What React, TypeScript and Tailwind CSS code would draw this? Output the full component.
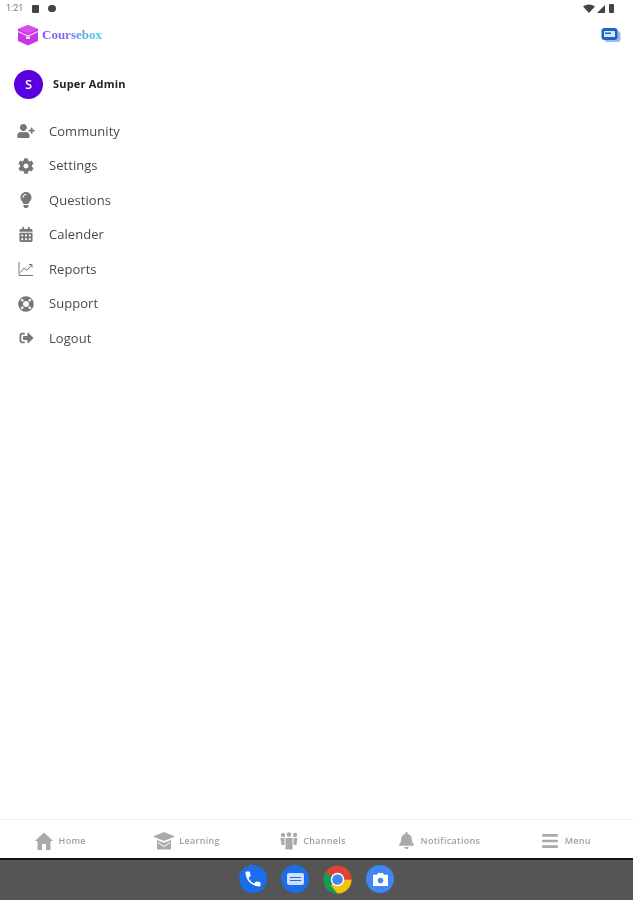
import React from 'react';
import {
  FaBars,
  FaBell,
  FaCalendarAlt,
  FaCog,
  FaLifeRing,
  FaLightbulb,
  FaSignOutAlt,
  FaUserPlus,
} from 'react-icons/fa';
import { MdPhone } from 'react-icons/md';

const ReportsIcon = ({ className }: { className?: string }) => (
  <svg viewBox="0 0 16 16" className={className} fill="none" stroke="currentColor" strokeWidth="1">
    <path d="M1 1v13.5h14" />
    <path d="M2.5 11.5 6 7l3 2.5L13.5 4" />
    <path d="M11 3.5h3v3" />
  </svg>
);

const HomeIcon = () => (
  <svg viewBox="0 0 18 18" className="w-[18px] h-[18px]" fill="currentColor">
    <path d="M9 0.5 18 9h-2.5v9H11v-6H7v6H2.5V9H0z" />
  </svg>
);

const LearningIcon = () => (
  <svg viewBox="0 0 22 18" className="w-[22px] h-[18px]" fill="currentColor">
    <path d="M11 0 22 4.5 11 9 0 4.5z" />
    <path d="M4 8 11 10.8 18 8v9.5H4z" />
    <path d="M5 10.5 11 14.5 17 10.5" fill="none" stroke="#fff" strokeWidth="1" />
  </svg>
);

const ChannelsIcon = () => (
  <svg viewBox="0 0 18 18" className="w-[18px] h-[18px]" fill="currentColor">
    <circle cx="3" cy="3" r="2.2" />
    <circle cx="9" cy="2.6" r="2.4" />
    <circle cx="15" cy="3" r="2.2" />
    <path d="M0.5 6h4v7h-3z" />
    <path d="M13.5 6h4l-1 7h-3z" />
    <path d="M5.5 6h7v11.5h-7z" />
  </svg>
);

const menu = [
  { label: 'Community', icon: <FaUserPlus className="w-[18px] h-[14px]" /> },
  { label: 'Settings', icon: <FaCog className="w-[16px] h-[16px]" /> },
  { label: 'Questions', icon: <FaLightbulb className="w-[12px] h-[16px]" /> },
  { label: 'Calender', icon: <FaCalendarAlt className="w-[14px] h-[15px]" /> },
  { label: 'Reports', icon: <ReportsIcon className="w-[16px] h-[16px]" /> },
  { label: 'Support', icon: <FaLifeRing className="w-[16px] h-[16px]" /> },
  { label: 'Logout', icon: <FaSignOutAlt className="w-[17px] h-[14px]" /> },
];

const tabs = [
  { label: 'Home', icon: <HomeIcon />, gap: 'gap-[6px]' },
  { label: 'Learning', icon: <LearningIcon />, gap: 'gap-[4px]' },
  { label: 'Channels', icon: <ChannelsIcon />, gap: 'gap-[5px]' },
  { label: 'Notifications', icon: <FaBell className="w-[15px] h-[17px]" />, gap: 'gap-[7px]' },
  { label: 'Menu', icon: <FaBars className="w-[18px] h-[18px]" />, gap: 'gap-[6px]' },
];

const Logo = () => (
  <svg viewBox="0 0 22 22" className="w-[22px] h-[22px]">
    <path d="M11 1 21 5v12l-10 4.5L1 17V5z" fill="#c936e8" />
    <path d="M1 5l10-4 10 4-10 4.5z" fill="#d94cf0" />
    <path d="M1 7.5l10 4.5 10-4.5" fill="none" stroke="#f6d9fb" strokeWidth="1.2" />
    <path d="M9 12.5h4v2.5H9z" fill="#f6d9fb" />
  </svg>
);

const ChatIcon = () => (
  <svg viewBox="0 0 20 17" className="w-[20px] h-[17px]">
    <rect x="3.5" y="4" width="16" height="11" rx="3" fill="#9db9e8" />
    <rect x="0.5" y="1" width="16" height="12" rx="3" fill="#1d63c9" />
    <rect x="3" y="4" width="11" height="6" rx="0.5" fill="#dbe7f8" />
    <rect x="4" y="5.5" width="6" height="1.5" fill="#1d63c9" />
  </svg>
);

const ChromeIcon = () => (
  <svg viewBox="0 0 30 30" className="w-[29px] h-[29px]">
    <circle cx="15" cy="15" r="14.5" fill="#db4437" />
    <path d="M15 15 2.4 7.8A14.5 14.5 0 0 0 15 29.5z" fill="#0f9d58" />
    <path d="M15 15h14.5A14.5 14.5 0 0 1 15 29.5L8 21z" fill="#f4c20d" />
    <path d="M15 8.5h12.4a14.5 14.5 0 0 1 2.1 6.5H21z" fill="#db4437" />
    <circle cx="15" cy="15" r="7" fill="#fff" />
    <circle cx="15" cy="15" r="5.5" fill="#4285f4" />
  </svg>
);

export default function App() {
  return (
    <div className="flex flex-col h-screen bg-white font-['Open_Sans',sans-serif] overflow-hidden blur-[0.5px]">
      {/* status bar */}
      <div className="flex items-center justify-between h-[17px] pl-[6px] pr-[19px] text-[#555] shrink-0">
        <div className="flex items-center gap-[9px]">
          <span className="text-[9px] text-[#777] font-['Roboto',sans-serif]">1:21</span>
          <span className="w-[7px] h-[8px] bg-[#444] rounded-[1px]" />
          <span className="w-[8px] h-[7px] bg-[#444] rounded-full" />
        </div>
        <div className="flex items-center gap-[2px] text-[#444]">
          <svg viewBox="0 0 12 9" className="w-[12px] h-[9px]" fill="currentColor">
            <path d="M0 2.5Q6-1.5 12 2.5L6 9z" />
          </svg>
          <svg viewBox="0 0 8 8" className="w-[8px] h-[8px]" fill="currentColor">
            <path d="M8 0v8H0z" />
          </svg>
          <span className="w-[5px] h-[9px] ml-[2px] bg-[#444] rounded-[1px]" />
        </div>
      </div>

      {/* header */}
      <div className="flex items-center justify-between pl-[17px] pr-[12px] h-[36px] shrink-0">
        <div className="flex items-center gap-[3px]">
          <Logo />
          <span className="text-[13px] font-['Liberation_Serif',serif] font-bold bg-gradient-to-r from-[#9a3cf0] via-[#6a7cf0] to-[#30d8e8] bg-clip-text text-transparent">
            Coursebox
          </span>
        </div>
        <ChatIcon />
      </div>

      {/* profile */}
      <div className="flex items-center gap-[10px] pl-[14px] mt-[17px] shrink-0">
        <div className="flex items-center justify-center w-[29px] h-[29px] rounded-full bg-[#5a00e0] text-white text-[13px] font-semibold">
          S
        </div>
        <span className="text-[11px] font-bold text-[#222] tracking-[0.2px]">Super Admin</span>
      </div>

      {/* menu */}
      <div className="flex-1 flex flex-col mt-[15px]">
        {menu.map((item) => (
          <div key={item.label} className="flex items-center h-[34.5px] pl-[17px]">
            <span className="flex items-center justify-center w-[18px] text-[#777]">{item.icon}</span>
            <span className="ml-[14px] text-[13px] text-[#4a4a4a] tracking-[0.05px]">{item.label}</span>
          </div>
        ))}
      </div>

      {/* bottom tabs */}
      <div className="grid grid-cols-5 h-[39px] -ml-[3px] pr-[4px] pt-[3px] border-t border-[#f0f0f0] shrink-0">
        {tabs.map((tab) => (
          <div key={tab.label} className={`flex items-center justify-center text-[#aaa] ${tab.gap}`}>
            {tab.icon}
            <span className="text-[9px] font-semibold tracking-[0.3px] text-[#a0a0a0]">{tab.label}</span>
          </div>
        ))}
      </div>

      {/* android dock */}
      <div className="flex items-center justify-center gap-[14px] h-[42px] pb-[2px] bg-[#555] border-t-2 border-[#111] shrink-0">
        <div className="flex items-center justify-center w-[28px] h-[28px] rounded-full bg-[#1a6ee8] text-white">
          <MdPhone className="w-[20px] h-[20px]" />
        </div>
        <div className="flex items-center justify-center w-[28px] h-[28px] rounded-full bg-[#1a6ee8]">
          <span className="flex flex-col justify-center gap-[2px] w-[17px] h-[12px] px-[3px] bg-[#cfe0fa] rounded-[2px]">
            <span className="h-[1px] bg-[#1a6ee8]" />
            <span className="h-[1px] bg-[#1a6ee8]" />
          </span>
        </div>
        <ChromeIcon />
        <div className="flex items-center justify-center w-[28px] h-[28px] rounded-full bg-[#4285f4]">
          <svg viewBox="0 0 18 16" className="w-[17px] h-[15px]">
            <path d="M1 3h4l1.5-2h5L13 3h4v12H1z" fill="#fff" />
            <circle cx="9" cy="9" r="3" fill="#4285f4" />
          </svg>
        </div>
      </div>
    </div>
  );
}
